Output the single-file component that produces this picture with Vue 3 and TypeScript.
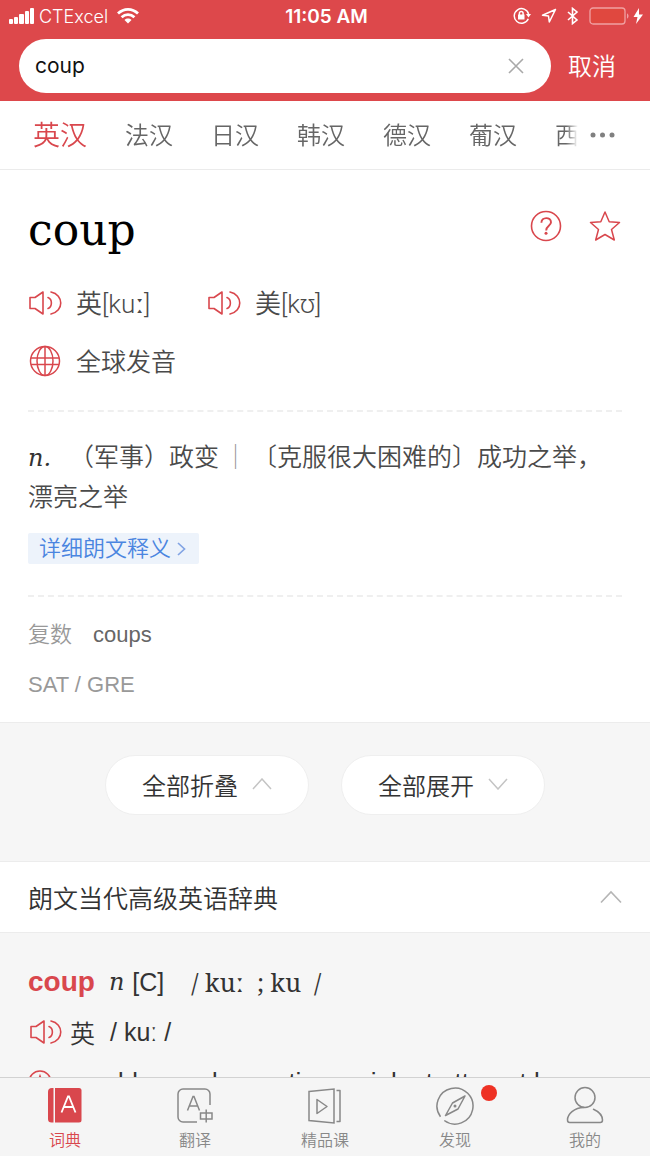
<script setup lang="ts">
import { ref } from 'vue'

interface Tab {
  id: string
  label: string
}

const query = ref('coup')
const languages = ['英汉', '法汉', '日汉', '韩汉', '德汉', '葡汉', '西汉']
const activeLanguage = ref('英汉')
const tabs: Tab[] = [
  { id: 'dict', label: '词典' },
  { id: 'translate', label: '翻译' },
  { id: 'course', label: '精品课' },
  { id: 'discover', label: '发现' },
  { id: 'me', label: '我的' },
]
const activeTab = ref('dict')
const expanded = ref(true)
</script>

<template>
  <div class="app">
    <header class="header">
      <div class="status">
        <div class="status-side">
          <svg class="signal" width="26" height="16" viewBox="0 0 26 16" fill="#fff" aria-hidden="true">
            <rect x="0" y="11" width="4" height="5" rx="1" />
            <rect x="5" y="9" width="4" height="7" rx="1" />
            <rect x="10" y="6" width="5" height="10" rx="1" />
            <rect x="16" y="3" width="4" height="13" rx="1" />
            <rect x="21" y="0" width="4" height="16" rx="1" />
          </svg>
          <span class="carrier">CTExcel</span>
          <svg class="wifi" width="22" height="16" viewBox="0 0 22 16" fill="none" stroke="#fff" stroke-width="2.8" aria-hidden="true">
            <path d="M1 5.6C6.800 0 15.200 0 21 5.600" />
            <path d="M4.600 9.200c3.700-3.500 9.100-3.500 12.800 0" />
            <path d="M7.500 12l3.500 3.500L14.500 12c-2-1.900-5-1.900-7 0z" fill="#fff" stroke="none" />
          </svg>
        </div>
        <span class="time">11:05 AM</span>
        <div class="status-side right">
          <svg width="18" height="18" viewBox="0 0 18 18" fill="none" stroke="#fff" stroke-width="1.500" aria-hidden="true">
            <path d="M15.300 11.700A7.300 7.300 0 1 1 15.600 7" />
            <path d="M13 7h5l-2.500 3.500z" fill="#fff" stroke="none" />
            <rect x="5" y="7.500" width="6.500" height="5" fill="#fff" stroke="none" />
            <path d="M6.400 8V6.300a1.850 1.850 0 0 1 3.700 0V8" />
          </svg>
          <svg width="16" height="16" viewBox="0 0 16 16" fill="none" stroke="#fff" stroke-width="1.500" stroke-linejoin="round" aria-hidden="true">
            <path d="M14.500 1.500L1.500 7.200l6 .8.800 6z" />
          </svg>
          <svg width="12" height="18" viewBox="0 0 12 18" fill="none" stroke="#fff" stroke-width="1.600" aria-hidden="true">
            <path d="M1 5l9 8-4.500 3.600V1.400L10 5l-9 8" />
          </svg>
          <svg width="55" height="18" viewBox="0 0 55 18" aria-hidden="true">
            <rect x="1" y="1" width="35" height="16" rx="3" fill="#e0483f" stroke="#f0a0a2" stroke-width="1.300" />
            <path d="M38 6.500c2 .500 2 4.500 0 5z" fill="#f0a0a2" />
            <path d="M50 1l-5.500 9h4L47 17l7-9.500h-4z" fill="#fff" />
          </svg>
        </div>
      </div>
      <form class="search" @submit.prevent>
        <div class="search-box">
          <input v-model="query" class="search-input" type="text" aria-label="搜索单词" />
          <button class="clear" type="button" aria-label="清除" @click="query = ''">
            <svg width="16" height="16" viewBox="0 0 16 16" fill="none" stroke="#a9a9a9" stroke-width="1.600">
              <path d="M1 1l14 14M15 1L1 15" />
            </svg>
          </button>
        </div>
        <button class="cancel" type="button">取消</button>
      </form>
    </header>

    <nav class="languages" aria-label="词典语言">
      <div class="language-list">
        <button
          v-for="language in languages"
          :key="language"
          type="button"
          class="language"
          :class="{ active: language === activeLanguage }"
          @click="activeLanguage = language"
        >
          {{ language }}
        </button>
      </div>
      <button class="more" type="button" aria-label="更多语言">
        <svg width="26" height="6" viewBox="0 0 26 6" fill="#808080">
          <circle cx="3" cy="3" r="2.500" />
          <circle cx="12.500" cy="3" r="2.500" />
          <circle cx="22" cy="3" r="2.500" />
        </svg>
      </button>
    </nav>

    <main class="content">
      <section class="word">
        <div class="word-head">
          <h1>coup</h1>
          <div class="word-actions">
            <button type="button" aria-label="帮助">
              <svg width="32" height="32" viewBox="0 0 32 32" fill="none" stroke="#d9474d" stroke-width="1.600">
                <circle cx="16" cy="16" r="14.500" />
                <path d="M11.400 12.800c0-6.200 9.600-6.200 9.600-.500 0 3.600-4.800 3.600-4.800 8.200" stroke-width="1.900" />
                <circle cx="16" cy="23.300" r="1.500" fill="#d9474d" stroke="none" />
              </svg>
            </button>
            <button type="button" aria-label="收藏">
              <svg width="32" height="32" viewBox="0 0 32 32" fill="none" stroke="#d9474d" stroke-width="1.500" stroke-linejoin="round">
                <path d="M16 2l4.200 9.700 10.300.8-8 7 2.800 10.500-9.300-5.500L6.700 30l2.800-10.500-8-7 10.300-.8z" />
              </svg>
            </button>
          </div>
        </div>
        <div class="sounds">
          <button class="sound" type="button">
            <svg width="34" height="26" viewBox="-1 0 34 26" fill="none" stroke="#d9474d" stroke-width="1.600" stroke-linejoin="round">
              <path d="M1 7.500h5L14 2v22l-8-5.500H1z" />
              <path d="M19 7.500c4.500 1.500 4.500 9.500 0 11M22 2c13 2.500 13 19.500 0 22" stroke-linecap="round" />
            </svg>
            <span>英[kuː]</span>
          </button>
          <button class="sound" type="button">
            <svg width="34" height="26" viewBox="-1 0 34 26" fill="none" stroke="#d9474d" stroke-width="1.600" stroke-linejoin="round">
              <path d="M1 7.500h5L14 2v22l-8-5.500H1z" />
              <path d="M19 7.500c4.500 1.500 4.500 9.500 0 11M22 2c13 2.500 13 19.500 0 22" stroke-linecap="round" />
            </svg>
            <span>美[kʊ]</span>
          </button>
        </div>
        <button class="sound global" type="button">
          <svg width="34" height="32" viewBox="0 0 34 32" fill="none" stroke="#d9474d" stroke-width="1.500">
            <circle cx="17" cy="16" r="14.500" />
            <ellipse cx="17" cy="16" rx="8" ry="14.500" />
            <path d="M17 1.500v29M3 13h28M3 19.500h28" />
          </svg>
          <span>全球发音</span>
        </button>

        <div class="definition">
          <p><i class="pos">n.</i>（军事）政变<span class="divider">｜</span>〔克服很大困难的〕成功之举，漂亮之举</p>
          <a class="detail" href="#longman">
            详细朗文释义
            <svg width="9" height="14" viewBox="0 0 9 14" fill="none" stroke="#82a4e4" stroke-width="1.700">
              <path d="M1 1l6.500 6L1 13" />
            </svg>
          </a>
        </div>

        <dl class="forms">
          <div>
            <dt>复数</dt>
            <dd>coups</dd>
          </div>
          <div>
            <dt>SAT / GRE</dt>
          </div>
        </dl>
      </section>

      <div class="fold">
        <button type="button" @click="expanded = false">
          全部折叠
          <svg width="20" height="12" viewBox="0 0 20 12" fill="none" stroke="#c4c4c4" stroke-width="1.500"><path d="M1 11l9-10 9 10" /></svg>
        </button>
        <button type="button" @click="expanded = true">
          全部展开
          <svg width="20" height="12" viewBox="0 0 20 12" fill="none" stroke="#c4c4c4" stroke-width="1.500"><path d="M1 1l9 10 9-10" /></svg>
        </button>
      </div>

      <section id="longman">
        <h2>
          <button class="dict-title" type="button" :aria-expanded="expanded" @click="expanded = !expanded">
            朗文当代高级英语辞典
            <svg width="22" height="14" viewBox="0 0 22 14" fill="none" stroke="#b5b5b5" stroke-width="1.600"><path d="M1 12.500L11 2l10 10.500" /></svg>
          </button>
        </h2>
        <div v-if="expanded" class="entry">
          <p class="entry-line">
            <b>coup</b><i>n</i><span class="grammar">[C]</span>
            <span class="ipa">/ kuː&nbsp; ; ku&nbsp; /</span>
          </p>
          <button class="entry-line entry-sound" type="button">
            <svg width="34" height="26" viewBox="-2 0 34 26" fill="none" stroke="#d9474d" stroke-width="1.600" stroke-linejoin="round">
              <path d="M1 7.500h5L14 2v22l-8-5.500H1z" />
              <path d="M19 7.500c4.500 1.500 4.500 9.500 0 11M21 2c13 2.500 13 19.500 0 22" stroke-linecap="round" />
            </svg>
            <span>英</span>
            <span class="entry-ipa">/ kuː /</span>
          </button>
          <p class="entry-line sense">
            <svg width="24" height="24" viewBox="0 0 24 24" fill="none" stroke="#d9474d" stroke-width="1.500">
              <circle cx="12" cy="12" r="11" />
              <path d="M8 17l4-11 4 11M9.500 13.500h5" />
            </svg>
            <span>a sudden and sometimes violent attempt by</span>
          </p>
        </div>
      </section>
    </main>

    <nav class="tabbar" aria-label="主导航">
      <button
        v-for="tab in tabs"
        :key="tab.id"
        type="button"
        class="tab"
        :class="{ active: tab.id === activeTab }"
        @click="activeTab = tab.id"
      >
        <span class="tab-icon">
          <svg v-if="tab.id === 'dict'" width="40" height="40" viewBox="0 0 40 40" aria-hidden="true">
            <path d="M8.500 2H7a4 4 0 0 0-4 4v27a3.500 3.500 0 0 0 3.500 3.500h2z" fill="currentColor" />
            <path d="M10 2h24a2.500 2.500 0 0 1 2.500 2.500V34a2.500 2.500 0 0 1-2.500 2.500H10z" fill="currentColor" />
            <path d="M16.500 26.500L23 10.500h1l6.500 16M18.800 21h9.400" fill="none" stroke="#fff" stroke-width="1.800" />
          </svg>
          <svg v-else-if="tab.id === 'translate'" width="40" height="40" viewBox="0 0 40 40" fill="none" stroke="currentColor" stroke-width="1.500" aria-hidden="true">
            <path d="M22 36H8a5 5 0 0 1-5-5V8a5 5 0 0 1 5-5h22a5 5 0 0 1 5 5v11" />
            <path d="M12.500 24.500l5.500-14h1l5.500 14M14.500 20h8" />
            <path d="M25.500 27h11.500v6h-11.500zM31.200 23.500v13" />
          </svg>
          <svg v-else-if="tab.id === 'course'" width="40" height="40" viewBox="0 0 40 40" fill="none" stroke="currentColor" stroke-width="1.500" aria-hidden="true">
            <path d="M4 5.500L29 3v34L4 34.500z" />
            <path d="M12 13.500v14L22 20.500zM31.500 4.500H35v31h-3.500" stroke-linejoin="round" />
          </svg>
          <svg v-else-if="tab.id === 'discover'" width="40" height="40" viewBox="0 0 40 40" fill="none" stroke="currentColor" stroke-width="1.500" aria-hidden="true">
            <path d="M5.500 30.700a18 18 0 1 1 3.800 3.800" />
            <path d="M30 10L17.500 17 10.500 29.500 23 23z" stroke-linejoin="round" />
            <circle cx="20" cy="20" r="1.500" fill="currentColor" stroke="none" />
          </svg>
          <svg v-else width="40" height="40" viewBox="0 0 40 40" fill="none" stroke="currentColor" stroke-width="1.500" aria-hidden="true">
            <circle cx="20" cy="11.500" r="10" />
            <path d="M19 21.500C9 21.500 2.500 28.500 2.500 34c0 1.800.7 2.500 2.200 2.500h30.600c1.500 0 2.200-.7 2.200-2.500 0-4-3.500-8.300-9-10.800" stroke-linecap="round" />
          </svg>
          <span v-if="tab.id === 'discover'" class="dot"></span>
        </span>
        <span class="tab-label">{{ tab.label }}</span>
      </button>
    </nav>
  </div>
</template>

<style>
body {
  margin: 0;
}
</style>

<style scoped>
.app {
  display: flex;
  flex-direction: column;
  height: 100vh;
  background: #fff;
  color: #4a4a4a;
  font-family: "Liberation Sans", "Noto Sans CJK SC", sans-serif;
  font-weight: 350;
}

button {
  padding: 0;
  border: 0;
  background: none;
  color: inherit;
  font: inherit;
  cursor: pointer;
}

svg {
  flex: none;
  display: block;
}

h1,
h2,
p,
dl,
dt,
dd {
  margin: 0;
  font-weight: inherit;
}

.header {
  flex: none;
  padding-bottom: 8px;
  background: #dd484b;
  color: #fff;
}

.status {
  display: grid;
  grid-template-columns: 1fr auto 1fr;
  align-items: center;
  height: 32px;
  padding: 0 6px 0 9px;
  font-family: Inter, sans-serif;
  font-size: 18px;
}

.status-side {
  display: flex;
  align-items: center;
}

.carrier {
  margin: 0 9px 0 4px;
}

.time {
  font-size: 19px;
  font-weight: 600;
}

.right {
  justify-content: flex-end;
  gap: 10px;
}

.search {
  display: flex;
  align-items: center;
  margin-top: 7px;
  padding: 0 34px 0 19px;
}

.search-box {
  flex: 1;
  display: flex;
  align-items: center;
  height: 54px;
  padding: 0 27px 0 16px;
  border-radius: 27px;
  background: #fff;
}

.search-input {
  flex: 1;
  min-width: 0;
  padding: 0 0 2px;
  border: 0;
  outline: 0;
  background: none;
  color: #111;
  font-family: Inter, sans-serif;
  font-size: 21px;
}

.cancel {
  margin-left: 17px;
  padding-bottom: 3px;
  font-size: 24px;
}

.languages {
  flex: none;
  display: flex;
  align-items: center;
  height: 68px;
  padding: 0 34px 0 33px;
  border-bottom: 1px solid #ebebeb;
}

.language-list {
  flex: 1;
  display: flex;
  align-items: center;
  gap: 38px;
  min-width: 0;
  padding-bottom: 4px;
  overflow: hidden;
  mask-image: linear-gradient(to left, transparent, #000 12px);
}

.language {
  flex: none;
  color: #666;
  font-size: 24px;
}

.language.active {
  color: #d9474d;
  font-size: 27px;
}

.more {
  margin-left: 12px;
}

.content {
  flex: 1;
  min-height: 0;
  overflow-y: auto;
  scrollbar-width: none;
  background: #f6f6f6;
}

.word {
  padding: 32px 28px 12px;
  border-bottom: 1px solid #ececec;
  background: #fff;
}

.word-head {
  display: flex;
  justify-content: space-between;
  height: 72px;
}

h1 {
  color: #000;
  font-family: "DejaVu Serif", serif;
  font-size: 44px;
  line-height: 56px;
}

.word-actions {
  display: flex;
  gap: 27px;
  height: 32px;
  padding: 8px 1px 0 0;
}

.sounds {
  display: flex;
}

.sound {
  display: flex;
  align-items: center;
  gap: 14px;
  height: 58px;
  font-family: Roboto, "Noto Sans", "Noto Sans CJK SC", sans-serif;
  font-size: 26px;
}

.sound span {
  padding-bottom: 3px;
}

.sounds .sound {
  min-width: 179px;
}

.global {
  font-size: 25px;
}

.definition {
  margin-top: 20px;
  padding: 25px 0 31px;
  border: dashed #efefef;
  border-width: 2px 0;
  font-size: 25px;
  line-height: 40px;
  text-spacing-trim: space-all;
}

.pos {
  display: inline-block;
  width: 41px;
  font-family: "DejaVu Serif", serif;
  font-size: 24px;
  line-height: 30px;
  color: #333;
}

.divider {
  margin: 0 4px;
  color: #999;
}

.detail {
  display: inline-flex;
  align-items: center;
  gap: 6px;
  height: 31px;
  margin-top: 16px;
  padding: 0 13px 0 11px;
  border-radius: 2px;
  background: #edf3fb;
  color: #4a85e0;
  font-size: 22px;
  line-height: 31px;
  text-decoration: none;
  vertical-align: top;
}

.forms {
  padding-top: 13px;
  font-size: 22px;
  line-height: 50px;
}

.forms div {
  display: flex;
  gap: 21px;
}

dt {
  color: #999;
}

dd {
  color: #666;
}

.fold {
  display: flex;
  justify-content: center;
  gap: 32px;
  padding: 32px 0 46px;
}

.fold button {
  display: flex;
  align-items: center;
  gap: 14px;
  height: 60px;
  padding: 0 36px 2px;
  border: 1px solid #efefef;
  border-radius: 30px;
  background: #fff;
  color: #333;
  font-size: 24px;
}

.dict-title {
  display: flex;
  align-items: center;
  justify-content: space-between;
  width: 100%;
  height: 72px;
  padding: 0 28px;
  border: solid #ececec;
  border-width: 1px 0;
  background: #fff;
  color: #333;
}

h2 {
  font-size: 25px;
}

.entry {
  padding: 24px 28px;
  color: #333;
  font-size: 25px;
}

.entry-line {
  display: flex;
  align-items: center;
  height: 50px;
  white-space: nowrap;
}

.entry b {
  color: #d9474d;
  font-size: 28px;
  font-weight: 700;
}

.entry i {
  margin: 0 8px 0 14px;
  font-family: "DejaVu Serif", serif;
  font-size: 24px;
}

.ipa {
  margin-left: 27px;
  font-family: "Noto Serif", "Liberation Serif", "DejaVu Serif", serif;
  font-weight: 400;
}

.entry-sound {
  gap: 8px;
}

.entry-ipa {
  margin-left: 7px;
}

.sense {
  gap: 8px;
  font-size: 26px;
}

.tabbar {
  flex: none;
  display: flex;
  height: 78px;
  border-top: 1px solid #d2d2d2;
  background: #f5f5f5;
}

.tab {
  flex: 1;
  display: flex;
  flex-direction: column;
  align-items: center;
  padding-top: 8px;
  color: #888;
}

.tab.active {
  color: #d9474d;
}

.tab-icon {
  position: relative;
}

.dot {
  position: absolute;
  top: -1px;
  right: -22px;
  width: 16px;
  height: 16px;
  border-radius: 50%;
  background: #ee3124;
}

.tab-label {
  margin-top: 3px;
  font-size: 16px;
  line-height: 24px;
}
</style>
